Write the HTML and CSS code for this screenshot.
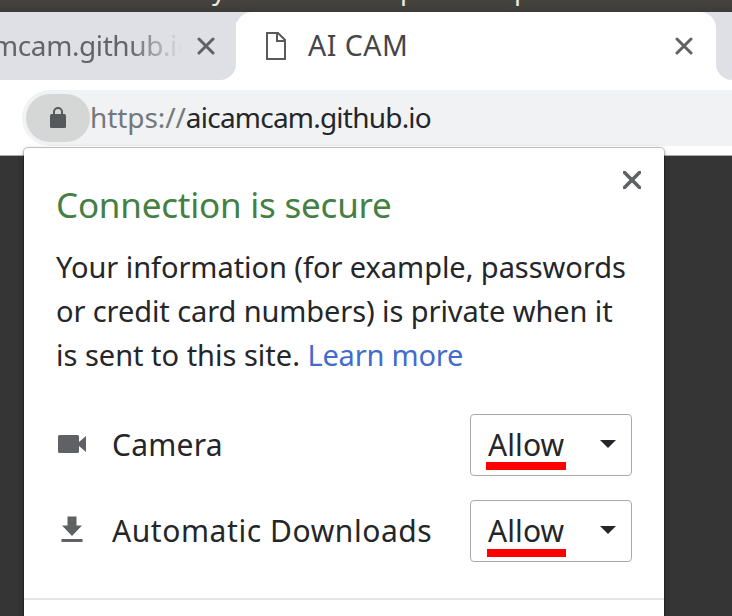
FILE: index.html
```html
<!DOCTYPE html>
<html lang="en">
<head>
<meta charset="utf-8">
<title>AI CAM</title>
<link rel="stylesheet" href="styles.css">
</head>
<body>
<div class="window">
  <header class="titlebar"><span class="t1">y</span><span class="t2">p</span><span class="t3">p</span></header>
  <nav class="tabs">
    <div class="tab tab-prev">
      <span class="prev-title">mcam.github.io</span>
      <svg class="close" viewBox="0 0 18 18"><path d="M2 2L16 16M16 2L2 16"/></svg>
    </div>
    <div class="tab tab-active">
      <svg class="file" viewBox="0 0 20 28"><path d="M1 1H12L19 8V27H1ZM11 1V9H19"/></svg>
      <span class="active-title">AI CAM</span>
      <svg class="close" viewBox="0 0 18 18"><path d="M2 2L16 16M16 2L2 16"/></svg>
    </div>
    <div class="tab tab-next"></div>
  </nav>
  <div class="toolbar">
    <div class="omnibox">
      <span class="chip"><svg class="lock" viewBox="0 0 16 22"><rect y="7" width="16" height="14" rx="1.5"/><path d="M4 8V5a4 4 0 0 1 8 0V8"/></svg></span>
      <span class="scheme">https://</span><span class="host">aicamcam.github.io</span>
    </div>
  </div>
  <main class="page">
    <section class="popup">
      <div class="heading-row">
        <h1>Connection is secure</h1>
        <svg class="close close-popup" viewBox="0 0 18 18"><path d="M1.5 1.5L16.5 16.5M16.5 1.5L1.5 16.5"/></svg>
      </div>
      <p><span class="l1">Your information (for example, passwords</span><br><span class="l2">or credit card numbers) is private when it</span><br><span class="l3">is sent to this site.</span> <a class="l4">Learn more</a></p>
      <div class="permission">
        <svg class="icon" viewBox="0 0 32 32"><path d="M3.500 7H21.500Q23 7 23 8.500V14L30 8V24L23 18V23.500Q23 25 21.500 25H3.500Q2 25 2 23.500V8.500Q2 7 3.500 7Z"/></svg>
        <span class="label camera">Camera</span>
        <div class="select"><span class="value">Allow</span><svg class="arrow" viewBox="0 0 16 8"><path d="M0 0H16L8 8Z"/></svg></div>
      </div>
      <div class="permission">
        <svg class="icon" viewBox="0 0 32 32"><path d="M11.500 2.500H20.500V11.500H26L16 22L6 11.500H11.500ZM5.500 25H26.500V28H5.500Z"/></svg>
        <span class="label downloads">Automatic Downloads</span>
        <div class="select second"><span class="value">Allow</span><svg class="arrow" viewBox="0 0 16 8"><path d="M0 0H16L8 8Z"/></svg></div>
      </div>
      <hr>
    </section>
  </main>
</div>
</body>
</html>
```
FILE: styles.css
```css
* { box-sizing: border-box; }
body { margin: 0; background: #353535; font-family: "Noto Sans", sans-serif; color: #242629; }
svg { display: block; flex: none; }
.window { width: 732px; height: 616px; overflow: hidden; display: flex; flex-direction: column; }
.titlebar { height: 12px; flex: none; overflow: hidden; display: flex; background: linear-gradient(#454440, #3c3b36); color: #eeeae0; font-size: 27px; line-height: 28px; padding-left: 212px; }
.titlebar span { margin-top: -25px; width: 16px; flex: none; }
.titlebar .t2 { margin-left: 172px; }
.titlebar .t3 { margin-left: 98px; }
.tabs { height: 68px; flex: none; display: flex; background: #dee0e6; }
.tab { display: flex; align-items: center; position: relative; }
.tab-prev { width: 236px; background: #dee0e6; border-radius: 0 0 16px 0; box-shadow: 10px 10px 0 #fff; }
.prev-title { width: 189px; margin-left: -8px; overflow: hidden; white-space: nowrap; font-size: 28px; line-height: 36px; letter-spacing: -.4px; margin-top: -2px; color: #626468; -webkit-mask-image: linear-gradient(90deg, #000 137px, transparent 190px); mask-image: linear-gradient(90deg, #000 137px, transparent 190px); }
.close { width: 18px; height: 18px; fill: none; stroke: #5f6164; stroke-width: 3; stroke-linecap: round; }
.tab-prev .close { margin-left: 16px; }
.tab-active { width: 480px; background: #fff; border-radius: 16px 16px 0 0; padding-left: 30px; }
.file { width: 20px; height: 28px; fill: none; stroke: #59595b; stroke-width: 2; }
.active-title { margin: -2px 0 0 22px; font-size: 28.500px; letter-spacing: .5px; color: #444649; white-space: nowrap; }
.tab-active .close { margin-left: auto; margin-right: 23px; }
.tab-next { width: 16px; background: #dee0e6; border-radius: 0 0 0 16px; box-shadow: -8px 8px 0 #fff; clip-path: inset(0); }
.tab-active::after { content: ""; position: absolute; left: 100%; bottom: 0; width: 16px; height: 16px; background: #fff; }
.toolbar { position: relative; height: 76px; flex: none; background: #fff; border-bottom: 1px solid #a9aeac; padding: 10px 0 0 22px; }
.omnibox { height: 56px; background: #f0f2f4; border-radius: 28px 0 0 28px; display: flex; align-items: center; padding-left: 4px; font-size: 28px; white-space: nowrap; }
.chip { width: 64px; height: 48px; border-radius: 24px; background: #d5d7d7; display: flex; align-items: center; justify-content: center; flex: none; }
.lock { width: 16px; height: 22px; fill: #56595b; }
.lock path { fill: none; stroke: #56595b; stroke-width: 2; }
.scheme, .host { margin-top: -2px; }
.scheme { color: #75787b; letter-spacing: -.08px; }
.host { letter-spacing: -.78px; }
.page { flex: 1; padding-left: 24px; }
.popup { position: relative; width: 640px; height: 500px; margin-top: -8px; background: #fff; border-radius: 4px; padding: 32px 32px 0; box-shadow: 0 0 0 1px rgba(0,0,0,.2), 0 2px 6px rgba(0,0,0,.3); }
.heading-row { height: 52px; display: flex; justify-content: space-between; }
h1 { margin: -1px 0 0; font-size: 35px; line-height: 52px; letter-spacing: -.22px; font-weight: 400; color: #448044; white-space: nowrap; }
.close-popup { margin: -9px -9px 0 0; stroke-width: 3.600; }
p { margin: 13px 0 37px; font-size: 29px; line-height: 44px; white-space: nowrap; }
.l1 { letter-spacing: -.05px; }
.l2 { letter-spacing: -.09px; }
.l4 { color: #416bcd; letter-spacing: -.2px; }
.permission { display: flex; align-items: center; height: 62px; margin-bottom: 24px; font-size: 30px; }
.icon { width: 32px; height: 32px; margin-top: -2px; fill: #5f6164; }
.label { margin: -1px 0 0 24px; white-space: nowrap; }
.camera { letter-spacing: .25px; }
.downloads { letter-spacing: .57px; }
.value { margin-top: -1px; letter-spacing: .1px; }
.select { position: relative; margin-left: auto; width: 162px; height: 62px; border: 1px solid #aaa; border-radius: 4px; display: flex; align-items: center; justify-content: space-between; padding: 0 15px 0 17px; }
.select::after { content: ""; position: absolute; left: 15px; top: 47px; width: 80px; height: 8px; background: #f00; }
.select.second::after { left: 16px; top: 48px; width: 79px; }
.arrow { width: 16px; height: 8px; margin-top: -2px; fill: #242629; }
hr { margin: 36px -32px 0; border: 0; border-top: 2px solid #e6e6e6; }
```
